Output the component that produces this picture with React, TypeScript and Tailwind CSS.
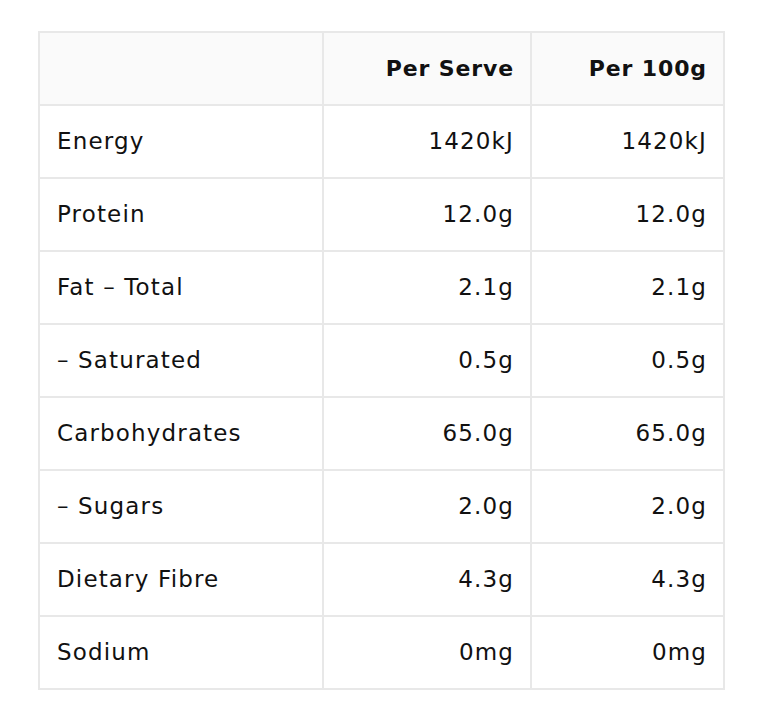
const rows: [string, string, string][] = [
  ["Energy", "1420kJ", "1420kJ"],
  ["Protein", "12.0g", "12.0g"],
  ["Fat – Total", "2.1g", "2.1g"],
  ["– Saturated", "0.5g", "0.5g"],
  ["Carbohydrates", "65.0g", "65.0g"],
  ["– Sugars", "2.0g", "2.0g"],
  ["Dietary Fibre", "4.3g", "4.3g"],
  ["Sodium", "0mg", "0mg"],
];

export default function App() {
  return (
    <div className="bg-white min-h-[718px] pt-[31px] pl-[38px] font-['DejaVu_Sans',sans-serif] text-[#111]">
      <table className="w-[685px] border-collapse table-fixed text-[22px]">
        <colgroup>
          <col className="w-[284px]" />
          <col className="w-[208px]" />
          <col className="w-[193px]" />
        </colgroup>
        <thead>
          <tr className="h-[73px] bg-[#fafafa]">
            <th className="border-2 border-[#e8e8e8]"></th>
            <th className="border-2 border-[#e8e8e8] pl-4 pr-[16px] text-right font-bold tracking-[0.04em]">Per Serve</th>
            <th className="border-2 border-[#e8e8e8] pl-4 pr-[16px] text-right font-bold tracking-[0.04em]">Per 100g</th>
          </tr>
        </thead>
        <tbody className="text-[23px] tracking-[0.05em]">
          {rows.map(([name, serve, per100]) => (
            <tr key={name} className="h-[73px]">
              <td className="border-2 border-[#e8e8e8] px-[17px]">{name}</td>
              <td className="border-2 border-[#e8e8e8] pl-4 pr-[16px] text-right">{serve}</td>
              <td className="border-2 border-[#e8e8e8] pl-4 pr-[16px] text-right">{per100}</td>
            </tr>
          ))}
        </tbody>
      </table>
    </div>
  );
}
